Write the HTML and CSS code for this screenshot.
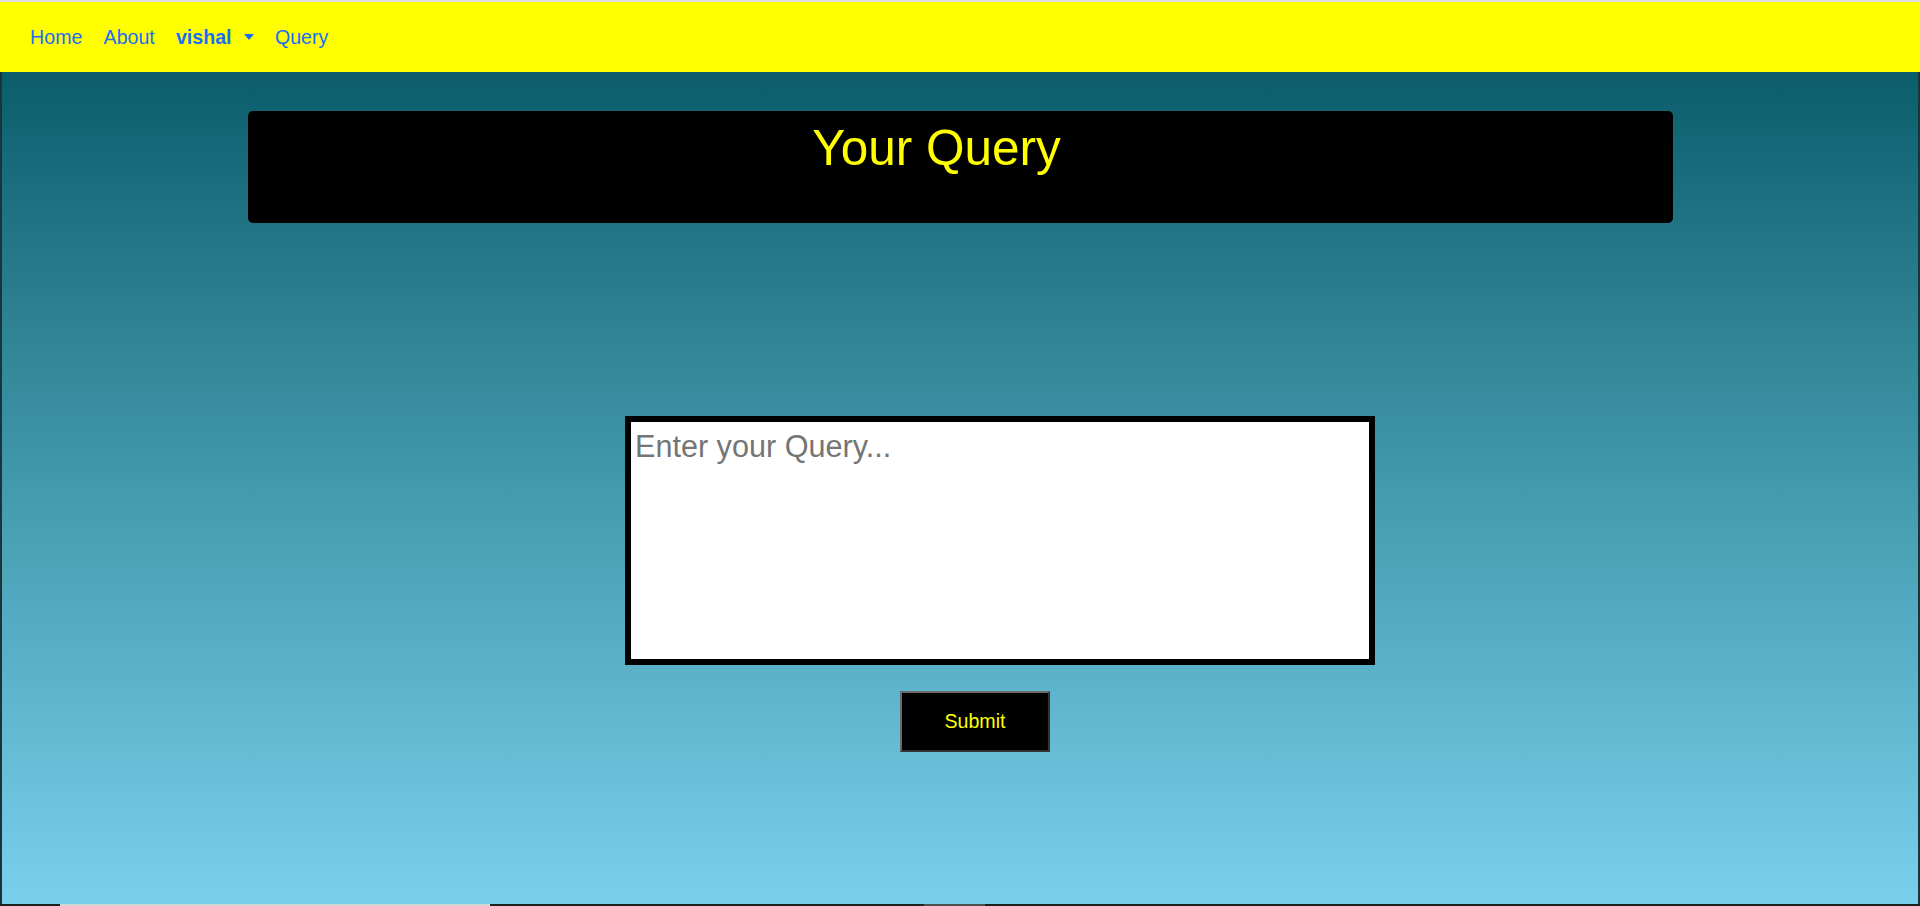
FILE: index.html
```html
<!DOCTYPE html>
<html lang="en">
<head>
<meta charset="utf-8">
<title>Your Query</title>
<link rel="stylesheet" href="styles.css">
</head>
<body>
<div class="top-strip"></div>
<nav class="navbar">
  <a class="nav-link" href="#">Home</a>
  <a class="nav-link" href="#">About</a>
  <a class="nav-link user" href="#">vishal<span class="caret"></span></a>
  <a class="nav-link" href="#">Query</a>
</nav>
<main class="main">
  <div class="title-box">
    <h1 class="title">Your Query</h1>
  </div>
  <form class="query-form">
    <textarea class="query-input" placeholder="Enter your Query..."></textarea>
    <button class="submit-btn" type="button">Submit</button>
  </form>
</main>
<div class="bottom-strip">
  <span class="seg seg-dark1"></span>
  <span class="seg seg-light"></span>
  <span class="seg seg-dark2"></span>
  <span class="seg seg-gray"></span>
  <span class="seg seg-dark3"></span>
</div>
</body>
</html>
```

FILE: styles.css
```css
* { box-sizing: border-box; }

html, body {
  margin: 0;
  padding: 0;
}

body {
  width: 1920px;
  height: 906px;
  display: flex;
  flex-direction: column;
  font-family: "Liberation Sans", Arial, sans-serif;
  overflow: hidden;
}

.top-strip {
  height: 2px;
  background: #dedede;
  flex: none;
}

.navbar {
  height: 70px;
  flex: none;
  background: #ffff00;
  display: flex;
  align-items: center;
  padding-left: 19.5px;
}

.nav-link {
  color: #1a6ef5;
  text-decoration: none;
  font-size: 19.6px;
  line-height: 29px;
  padding: 0 10.6px;
  display: flex;
  align-items: center;
}

.nav-link.user {
  font-weight: bold;
}

.caret {
  display: inline-block;
  width: 0;
  height: 0;
  margin-left: 12.2px;
  border-top: 6px solid #1a6ef5;
  border-left: 5.5px solid transparent;
  border-right: 5.5px solid transparent;
}

.main {
  flex: 1;
  display: flex;
  flex-direction: column;
  align-items: center;
  background: linear-gradient(to bottom, #0b5d6b 0%, #3f95a8 46%, #7ad0ec 100%);
  border-left: 2px solid #17363c;
  border-right: 2px solid #17363c;
}

.title-box {
  margin-top: 39px;
  width: 1425px;
  height: 112px;
  background: #000;
  border-radius: 5px;
  padding-top: 7px;
  padding-right: 47px;
}

.title {
  margin: 0;
  text-align: center;
  color: #ffff00;
  font-weight: normal;
  font-size: 49.5px;
  line-height: 59px;
}

.query-form {
  margin-top: 193px;
  width: 830px;
  padding-left: 80px;
  display: flex;
  flex-direction: column;
}

.query-input {
  width: 750px;
  height: 249px;
  border: 6px solid #000;
  background: #fff;
  padding: 7px 4px;
  font-family: "Liberation Sans", Arial, sans-serif;
  font-size: 30.6px;
  resize: none;
  outline: none;
  margin: 0;
  display: block;
}

.query-input::placeholder {
  color: #757575;
}

.submit-btn {
  margin-top: 26px;
  margin-left: 275px;
  width: 150px;
  height: 61px;
  background: #000;
  color: #ffff00;
  font-family: "Liberation Sans", Arial, sans-serif;
  font-size: 19.6px;
  border-style: solid;
  border-width: 2px;
  border-color: #6a6a6a #333 #333 #6a6a6a;
  padding: 0;
}

.bottom-strip {
  height: 2px;
  flex: none;
  display: flex;
}

.seg { height: 2px; display: block; }
.seg-dark1 { width: 60px; background: #202020; }
.seg-light { width: 430px; background: #d6d6d6; }
.seg-dark2 { width: 434px; background: #202020; }
.seg-gray { width: 61px; background: #505050; }
.seg-dark3 { flex: 1; background: #202020; }
```
